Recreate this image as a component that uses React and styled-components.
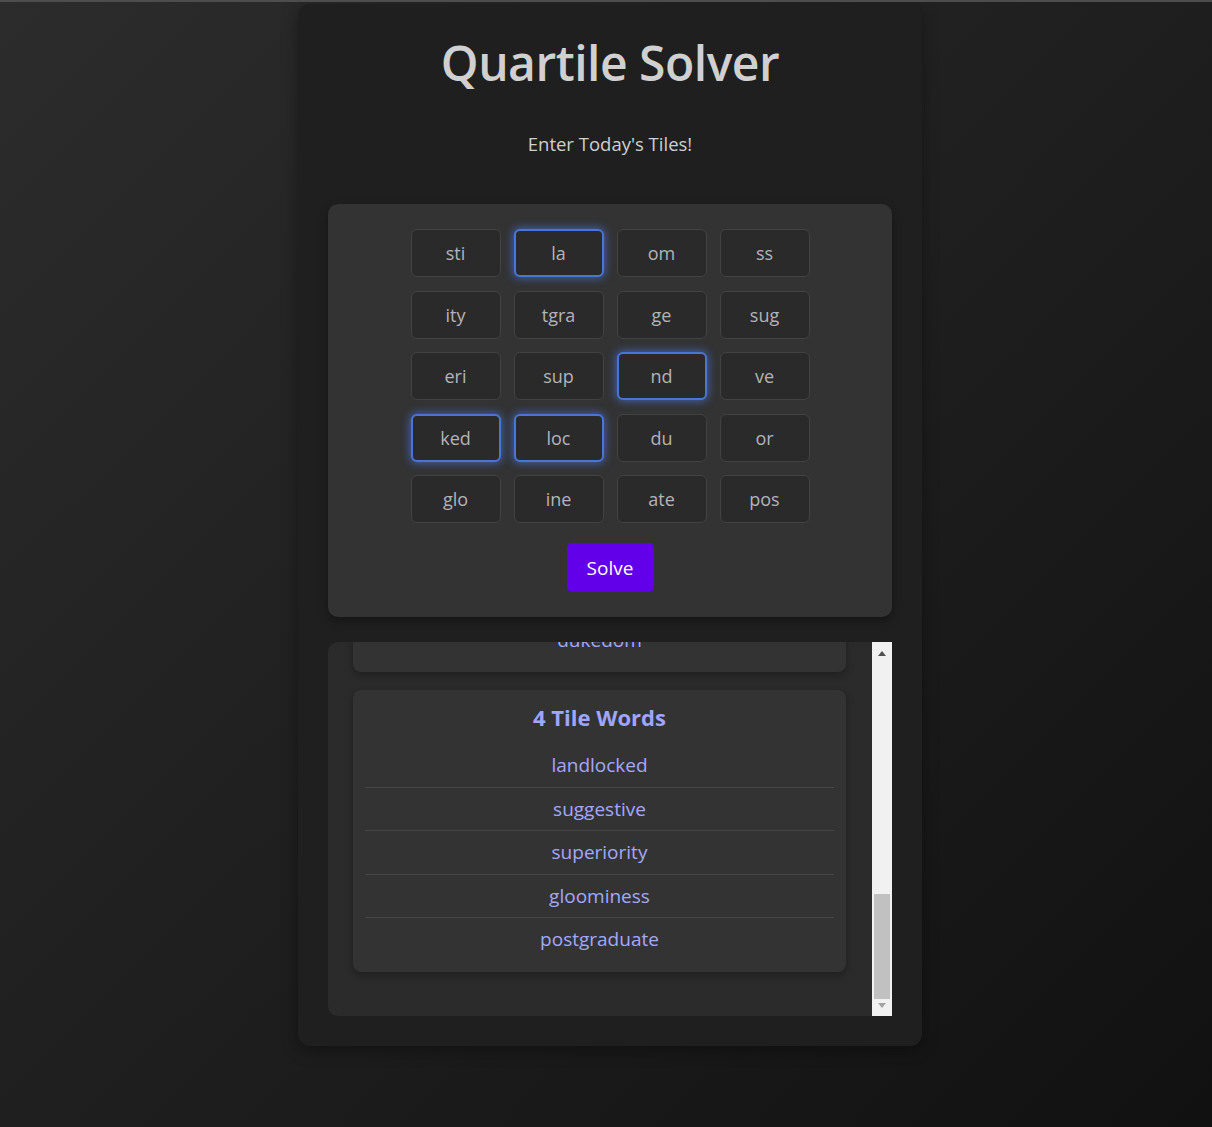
import { useLayoutEffect, useRef, useState } from "react";
import styled, { createGlobalStyle, css } from "styled-components";

const GlobalStyle = createGlobalStyle`
  html, body {
    margin: 0;
    padding: 0;
  }
  body {
    min-height: 100vh;
    border-top: 2px solid #4d4d4d;
    box-sizing: border-box;
    background: linear-gradient(135deg, #2c2c2c 0%, #1c1c1c 60%, #111111 100%);
    font-family: "Open Sans", "Noto Sans", sans-serif;
    color: #cccccc;
  }
`;

const Page = styled.div`
  display: flex;
  justify-content: center;
  padding: 2px 0 0 8px;
`;

const Container = styled.main`
  width: 624px;
  box-sizing: border-box;
  padding: 30px;
  background-color: #1f1f1f;
  border-radius: 12px;
  box-shadow: 0 4px 16px rgba(0, 0, 0, 0.35);
  display: flex;
  flex-direction: column;
  align-items: stretch;
`;

const Title = styled.h1`
  margin: 0;
  text-align: center;
  font-size: 48px;
  font-weight: 600;
  line-height: 58px;
  color: #d0d0d0;
  letter-spacing: -0.5px;
`;

const Subtitle = styled.p`
  margin: 39px 0 0;
  text-align: center;
  font-size: 18.5px;
  line-height: 26px;
  color: #cfcfcf;
`;

const TilePanel = styled.section`
  margin-top: 47px;
  padding: 25px;
  background-color: #333333;
  border-radius: 10px;
  box-shadow: 0 4px 10px rgba(0, 0, 0, 0.3);
  display: flex;
  flex-direction: column;
  align-items: center;
  gap: 20px;
`;

const TileGrid = styled.div`
  display: grid;
  grid-template-columns: repeat(4, 90px);
  column-gap: 13px;
  row-gap: 13.5px;
`;

const Tile = styled.button`
  height: 48px;
  box-sizing: border-box;
  border: 1px solid #424242;
  border-radius: 6px;
  background-color: #2a2a2a;
  color: #b2b4b8;
  font-family: inherit;
  font-size: 18px;
  cursor: pointer;

  ${(p) =>
    p.$selected &&
    css`
      border: 2px solid #4a74d6;
      box-shadow: 0 0 8px 1px rgba(72, 118, 230, 0.7);
    `}
`;

const SolveButton = styled.button`
  width: 87px;
  height: 49px;
  border: none;
  border-radius: 5px;
  background-color: #6200ea;
  color: #ffffff;
  font-family: inherit;
  font-size: 19px;
  cursor: pointer;
`;

const ResultsFrame = styled.section`
  margin-top: 25px;
  height: 374px;
  display: flex;
  background-color: #2b2b2b;
  border-radius: 10px;
`;

const ScrollArea = styled.div`
  flex: 1;
  overflow-y: auto;
  scrollbar-width: none;
  box-sizing: border-box;
  padding: 25px 26px 44px 25px;
  display: flex;
  flex-direction: column;
  gap: 18px;

  &::-webkit-scrollbar {
    display: none;
  }
`;

const Scrollbar = styled.div`
  width: 20px;
  flex-shrink: 0;
  background-color: #f1f1f1;
  display: flex;
  flex-direction: column;
`;

const ArrowButton = styled.div`
  height: 17px;
  display: flex;
  justify-content: center;
  align-items: ${(p) => (p.$down ? "flex-start" : "flex-end")};

  &::before {
    content: "";
    width: 0;
    height: 0;
    border-left: 4.5px solid transparent;
    border-right: 4.5px solid transparent;
    ${(p) =>
      p.$down
        ? css`
            border-top: 5px solid #a3a3a3;
            margin-top: 4px;
          `
        : css`
            border-bottom: 5px solid #505050;
            margin-bottom: 3px;
          `}
  }
`;

const Track = styled.div`
  flex: 1;
  position: relative;
`;

const Thumb = styled.div`
  position: absolute;
  left: 2px;
  right: 2px;
  background-color: #c1c1c1;
`;

const GroupCard = styled.div`
  flex-shrink: 0;
  padding: 12px 12px 11px;
  background-color: #333333;
  border-radius: 8px;
  box-shadow: 0 3px 8px rgba(0, 0, 0, 0.3);
`;

const GroupTitle = styled.h3`
  margin: 0 0 12px;
  text-align: center;
  font-size: 22px;
  line-height: 30px;
  font-weight: 700;
  color: #a0a6ff;
`;

const WordList = styled.ul`
  list-style: none;
  margin: 0;
  padding: 0;
`;

const Word = styled.li`
  padding: 10px 0;
  text-align: center;
  font-size: 19px;
  line-height: 22.5px;
  color: #a3a8ff;
  border-bottom: 1px solid #464646;

  &:last-child {
    border-bottom: none;
  }
`;

const TILES = [
  "sti", "la", "om", "ss",
  "ity", "tgra", "ge", "sug",
  "eri", "sup", "nd", "ve",
  "ked", "loc", "du", "or",
  "glo", "ine", "ate", "pos",
];

const GROUPS = [
  {
    title: "2 Tile Words",
    words: [
      "land", "lass", "laity", "lave", "gloom", "gloss", "glove",
      "vend", "orate", "supine", "locate", "duked",
    ],
  },
  { title: "3 Tile Words", words: ["vestige", "vendor", "superior", "dukedom"] },
  {
    title: "4 Tile Words",
    words: ["landlocked", "suggestive", "superiority", "gloominess", "postgraduate"],
  },
];

const TRACK = 340;

const App = () => {
  const [selected] = useState([1, 10, 12, 13]);
  const [thumb, setThumb] = useState({ top: 0, height: TRACK });
  const scrollRef = useRef(null);

  const updateThumb = () => {
    const el = scrollRef.current;
    if (!el) return;
    const height = Math.max(20, (el.clientHeight / el.scrollHeight) * TRACK);
    const max = el.scrollHeight - el.clientHeight;
    const top = max > 0 ? (el.scrollTop / max) * (TRACK - height) : 0;
    setThumb({ top, height });
  };

  useLayoutEffect(() => {
    const el = scrollRef.current;
    if (el) el.scrollTop = el.scrollHeight;
    updateThumb();
  }, []);

  return (
    <>
      <GlobalStyle />
      <Page>
        <Container>
          <Title>Quartile Solver</Title>
          <Subtitle>Enter Today's Tiles!</Subtitle>
          <TilePanel>
            <TileGrid>
              {TILES.map((t, i) => (
                <Tile key={i} $selected={selected.includes(i)}>
                  {t}
                </Tile>
              ))}
            </TileGrid>
            <SolveButton>Solve</SolveButton>
          </TilePanel>
          <ResultsFrame>
            <ScrollArea ref={scrollRef} onScroll={updateThumb}>
              {GROUPS.map((g) => (
                <GroupCard key={g.title}>
                  <GroupTitle>{g.title}</GroupTitle>
                  <WordList>
                    {g.words.map((w) => (
                      <Word key={w}>{w}</Word>
                    ))}
                  </WordList>
                </GroupCard>
              ))}
            </ScrollArea>
            <Scrollbar>
              <ArrowButton />
              <Track>
                <Thumb style={{ top: thumb.top, height: thumb.height }} />
              </Track>
              <ArrowButton $down />
            </Scrollbar>
          </ResultsFrame>
        </Container>
      </Page>
    </>
  );
};

export default App;
